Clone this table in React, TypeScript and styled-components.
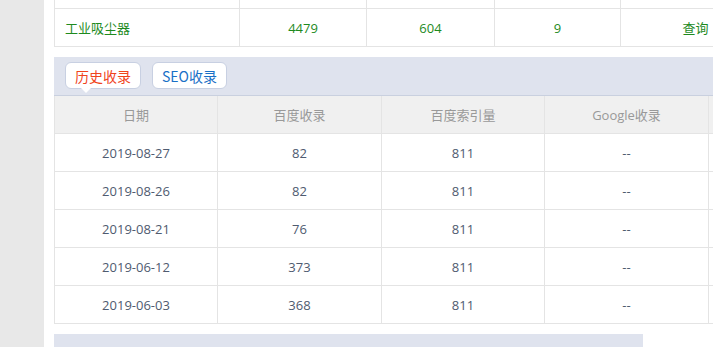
import React from 'react';
import styled, { createGlobalStyle } from 'styled-components';

const GlobalStyle = createGlobalStyle`
  html, body {
    margin: 0;
    padding: 0;
    background: #ffffff;
    overflow: hidden;
  }
  body {
    font-family: 'Open Sans', 'Noto Sans CJK SC', sans-serif;
    font-size: 13px;
  }
  * {
    box-sizing: border-box;
  }
`;

const Page = styled.div`
  display: flex;
  width: 900px;
  min-height: 347px;
`;

const Sidebar = styled.div`
  flex: 0 0 44px;
  background: #e8e8e8;
`;

const Content = styled.div`
  flex: 1;
  padding-left: 10px;
`;

const Grid = styled.div<{ $cols: string }>`
  display: grid;
  grid-template-columns: ${(p) => p.$cols};
  border-left: 1px solid #e4e4e4;
`;

const TopGrid = styled(Grid)`
  border-top: 1px solid #e4e4e4;
  margin-top: -30px;
`;

const Cell = styled.div<{ $align?: string; $color?: string; $head?: boolean }>`
  height: 38px;
  display: flex;
  align-items: center;
  justify-content: ${(p) => p.$align ?? 'center'};
  padding: 0 10px;
  border-right: 1px solid #e4e4e4;
  border-bottom: 1px solid #e4e4e4;
  background: ${(p) => (p.$head ? '#f0f0f0' : '#ffffff')};
  color: ${(p) => p.$color ?? '#4f5b70'};
  white-space: nowrap;
`;

const TabBar = styled.div`
  display: flex;
  gap: 11px;
  margin-top: 10px;
  height: 39px;
  padding: 5px 11px 0;
  background: #dfe3ee;
  border-bottom: 1px solid #c9d0df;
`;

const TabButton = styled.div<{ $color: string; $active?: boolean }>`
  position: relative;
  height: 27px;
  padding: 0 9px;
  display: flex;
  align-items: center;
  background: #ffffff;
  border: 1px solid #c8d0e2;
  border-radius: 6px;
  color: ${(p) => p.$color};
  font-family: 'Noto Sans CJK SC', sans-serif;
  font-size: 14px;

  ${(p) =>
    p.$active &&
    `
    &::after {
      content: '';
      position: absolute;
      left: 15px;
      bottom: -5px;
      border-left: 5px solid transparent;
      border-right: 5px solid transparent;
      border-top: 5px solid #ffffff;
    }
  `}
`;

const HeadText = styled.span`
  color: #999999;
`;

const BottomPanel = styled.div`
  width: 589px;
  margin-top: 10px;
  height: 40px;
  background: #dfe3ee;
  padding: 9px 30px;
  color: #333333;
  font-family: 'Noto Sans CJK SC', sans-serif;
  font-size: 15px;
  font-weight: bold;
`;

const topCols = '185px 127px 128px 126px 150px 1fr';
const histCols = '163px 164px 163px 164px 1fr';
const green = '#1e8a1e';

const history = [
  { date: '2019-08-27', baidu: 82, index: 811, google: '--' },
  { date: '2019-08-26', baidu: 82, index: 811, google: '--' },
  { date: '2019-08-21', baidu: 76, index: 811, google: '--' },
  { date: '2019-06-12', baidu: 373, index: 811, google: '--' },
  { date: '2019-06-03', baidu: 368, index: 811, google: '--' },
];

export default function App() {
  return (
    <>
      <GlobalStyle />
      <Page>
        <Sidebar />
        <Content>
          <TopGrid $cols={topCols}>
            <Cell />
            <Cell />
            <Cell />
            <Cell />
            <Cell />
            <Cell />
            <Cell $align="flex-start" $color={green}>
              工业吸尘器
            </Cell>
            <Cell $color={green}>4479</Cell>
            <Cell $color={green}>604</Cell>
            <Cell $color={green}>9</Cell>
            <Cell $color={green}>查询</Cell>
            <Cell />
          </TopGrid>

          <TabBar>
            <TabButton $color="#f0441c" $active>
              历史收录
            </TabButton>
            <TabButton $color="#1a70c6">SEO收录</TabButton>
          </TabBar>

          <Grid $cols={histCols}>
            {['日期', '百度收录', '百度索引量', 'Google收录', ''].map((h, i) => (
              <Cell key={i} $head>
                <HeadText>{h}</HeadText>
              </Cell>
            ))}
            {history.map((row) => (
              <React.Fragment key={row.date}>
                <Cell>{row.date}</Cell>
                <Cell>{row.baidu}</Cell>
                <Cell>{row.index}</Cell>
                <Cell>{row.google}</Cell>
                <Cell />
              </React.Fragment>
            ))}
          </Grid>

          <BottomPanel>百度权重历史</BottomPanel>
        </Content>
      </Page>
    </>
  );
}
